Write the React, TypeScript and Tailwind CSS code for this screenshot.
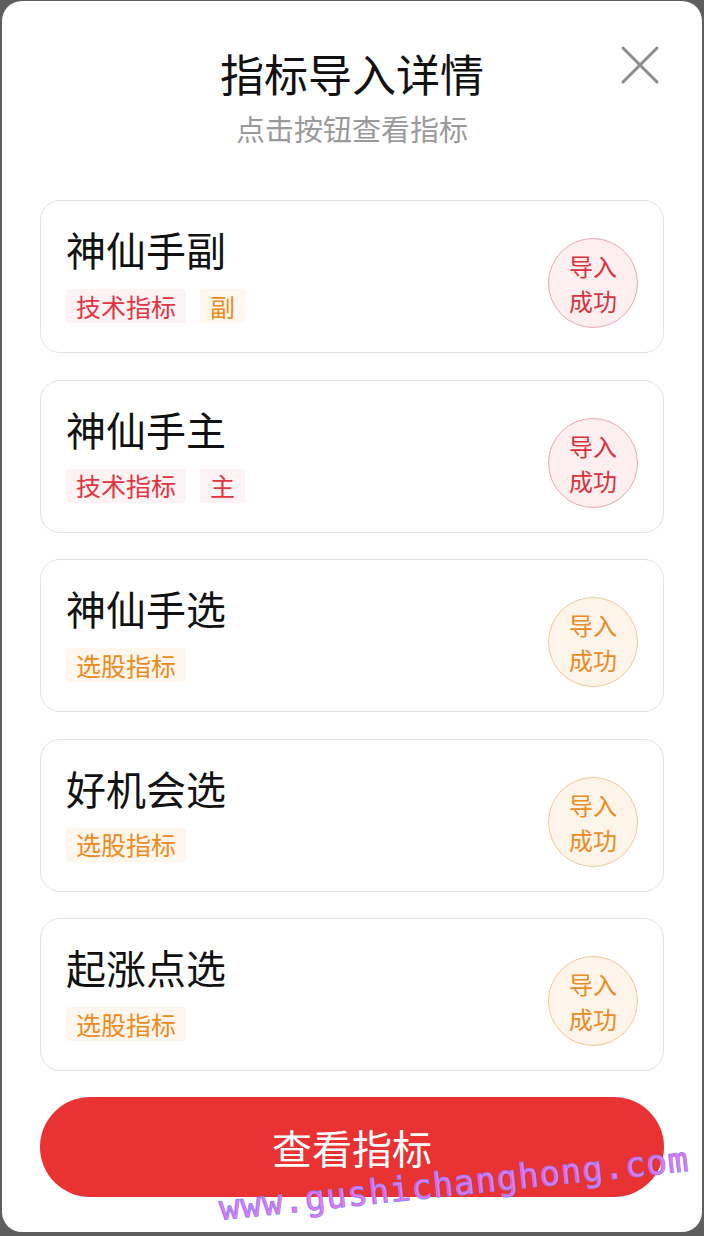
import React from "react";

type Tag = { text: string; tone: "red" | "orange" };
type Item = { name: string; tags: Tag[]; tone: "red" | "orange" };

const items: Item[] = [
  { name: "神仙手副", tags: [{ text: "技术指标", tone: "red" }, { text: "副", tone: "orange" }], tone: "red" },
  { name: "神仙手主", tags: [{ text: "技术指标", tone: "red" }, { text: "主", tone: "red" }], tone: "red" },
  { name: "神仙手选", tags: [{ text: "选股指标", tone: "orange" }], tone: "orange" },
  { name: "好机会选", tags: [{ text: "选股指标", tone: "orange" }], tone: "orange" },
  { name: "起涨点选", tags: [{ text: "选股指标", tone: "orange" }], tone: "orange" },
];

const font = { fontFamily: '"Noto Sans CJK SC", "Noto Sans", sans-serif' };

function TagChip({ tag }: { tag: Tag }) {
  return tag.tone === "red" ? (
    <span className="h-[34px] px-[10px] flex items-center text-[25px] leading-none text-[#e5343f] bg-[#fdf2f4] rounded-[3px]">
      {tag.text}
    </span>
  ) : (
    <span className="h-[34px] px-[10px] flex items-center text-[25px] leading-none text-[#ee8a1c] bg-[#fff7ee] rounded-[3px]">
      {tag.text}
    </span>
  );
}

function Badge({ tone }: { tone: "red" | "orange" }) {
  const cls =
    tone === "red"
      ? "bg-[#fdeef0] border-[#e7a9b2] text-[#d8323d]"
      : "bg-[#fdf4ea] border-[#efc996] text-[#ec8a24]";
  return (
    <div
      className={
        "mt-[37px] w-[90px] h-[90px] rounded-full border flex flex-col items-center justify-center text-[24px] leading-[35px] " +
        cls
      }
    >
      <span>导入</span>
      <span>成功</span>
    </div>
  );
}

function Card({ item }: { item: Item }) {
  return (
    <div className="h-[153px] border border-[#e3e3e3] rounded-[20px] flex justify-between pl-[25px] pr-[25px]">
      <div className="pt-[25px] flex flex-col">
        <div className="text-[40px] leading-[46px] text-[#111]">{item.name}</div>
        <div className="mt-[17px] flex gap-[14px]">
          {item.tags.map((t) => (
            <TagChip key={t.text} tag={t} />
          ))}
        </div>
      </div>
      <Badge tone={item.tone} />
    </div>
  );
}

export default function App() {
  return (
    <div className="w-[704px] h-[1236px] bg-[#5e5e5e] pt-[1px] px-[2px] pb-[4px] overflow-hidden" style={font}>
      <div className="relative h-full bg-white rounded-[20px] flex flex-col px-[38px]">
        <div className="pt-[46px] text-center text-[44px] leading-[52px] text-[#111]">指标导入详情</div>
        <div className="mt-[11px] text-center text-[29px] leading-[36px] text-[#9a9a9a]">点击按钮查看指标</div>
        <button className="absolute left-[617px] top-[43px] w-[42px] h-[42px] flex items-center justify-center" aria-label="close">
          <svg width="40" height="40" viewBox="0 0 40 40">
            <path d="M3 3 L37 37 M37 3 L3 37" stroke="#8a8a8a" strokeWidth="3" strokeLinecap="round" />
          </svg>
        </button>
        <div className="mt-[54px] flex flex-col gap-[26.5px]">
          {items.map((it) => (
            <Card key={it.name} item={it} />
          ))}
        </div>
        <div className="mt-[26px] h-[100px] rounded-full bg-[#e93232] flex items-center justify-center text-white text-[40px]">
          查看指标
        </div>
        <div
          className="absolute left-[219px] top-[1190px] text-[34px] leading-none text-[#ff6ee8] tracking-[1px] -rotate-6 origin-bottom-left pointer-events-none"
          style={{ fontFamily: '"DejaVu Sans Mono", monospace', WebkitTextStroke: "1px #8a86ff" }}
        >
          www.gushichanghong.com
        </div>
      </div>
    </div>
  );
}
